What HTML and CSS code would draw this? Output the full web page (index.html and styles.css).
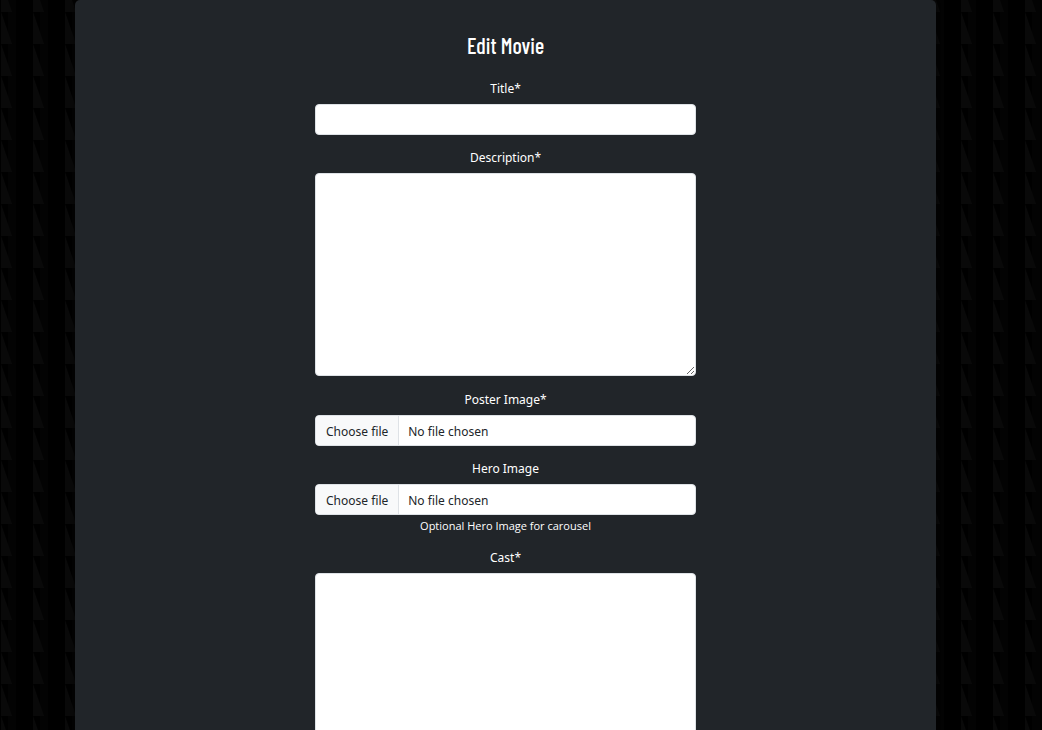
FILE: index.html
```html
<!DOCTYPE html>
<html lang="en">
<head>
<meta charset="utf-8">
<title>Edit Movie</title>
<link rel="stylesheet" href="styles.css">
</head>
<body>
<main class="card">
  <h1 class="heading">Edit Movie</h1>
  <form class="form">
    <div class="field">
      <label class="label" for="title">Title*</label>
      <input class="control" id="title" type="text" required>
    </div>
    <div class="field">
      <label class="label" for="description">Description*</label>
      <textarea class="control area" id="description" required></textarea>
    </div>
    <div class="field">
      <label class="label" for="poster">Poster Image*</label>
      <div class="control file">
        <span class="file-button">Choose file</span>
        <span class="file-name">No file chosen</span>
        <input class="file-input" id="poster" type="file">
      </div>
    </div>
    <div class="field">
      <label class="label" for="hero">Hero Image</label>
      <div class="control file">
        <span class="file-button">Choose file</span>
        <span class="file-name">No file chosen</span>
        <input class="file-input" id="hero" type="file" aria-describedby="hero-help">
      </div>
      <small class="help" id="hero-help">Optional Hero Image for carousel</small>
    </div>
    <div class="field">
      <label class="label" for="cast">Cast*</label>
      <textarea class="control area" id="cast" required></textarea>
    </div>
  </form>
</main>
</body>
</html>
```

FILE: styles.css
```css
* { box-sizing: border-box; }

html { scrollbar-width: none; }

body {
  margin: 0;
  padding: 0 106px 0 75px;
  background: #000 url("data:image/svg+xml,%3Csvg xmlns='http://www.w3.org/2000/svg' width='32' height='32'%3E%3Crect width='32' height='32' fill='%23000'/%3E%3Crect x='7' width='8' height='32' fill='%23030303'/%3E%3Cpath d='M0 0L11 32H0z' fill='%23090909'/%3E%3C/svg%3E") 1px 12px;
  color: #fff;
  font-family: "Noto Sans", "Open Sans", sans-serif;
  font-size: 12px;
  line-height: 20px;
}

.card {
  padding: 32px 24px;
  border-radius: 5px;
  background: #212529;
  box-shadow: 0 2px 4px rgba(0, 0, 0, 0.5);
}

.heading {
  margin: 0 0 21px;
  font-family: "Barlow Condensed", "Roboto Condensed", "Liberation Sans Narrow", "Liberation Sans", sans-serif;
  font-size: 22px;
  font-weight: 500;
  line-height: 26px;
  text-align: center;
}

.form {
  display: flex;
  flex-direction: column;
  gap: 13px;
  max-width: 381px;
  margin: 0 auto;
}

.field {
  display: flex;
  flex-direction: column;
  text-align: center;
}

.label { margin-bottom: 5px; }

.control {
  width: 100%;
  height: 31px;
  padding: 4px 9px;
  border: 1px solid #dee2e6;
  border-radius: 4px;
  background: #fff;
  color: #212529;
  font: inherit;
}

.area {
  height: 203px;
  margin-bottom: 1px;
  resize: vertical;
}

.file {
  position: relative;
  display: flex;
  padding: 0;
  overflow: hidden;
  line-height: 31px;
}

.file-button {
  padding: 0 10px;
  border-right: 1px solid #dee2e6;
  background: #f8f9fa;
}

.file-name { padding: 0 9px; }

.file-input {
  position: absolute;
  inset: 0;
  width: 100%;
  opacity: 0;
}

.help {
  margin: 3px 0 1px;
  font-family: "Open Sans", "Noto Sans", sans-serif;
  font-size: 11px;
  line-height: 16px;
}
```
